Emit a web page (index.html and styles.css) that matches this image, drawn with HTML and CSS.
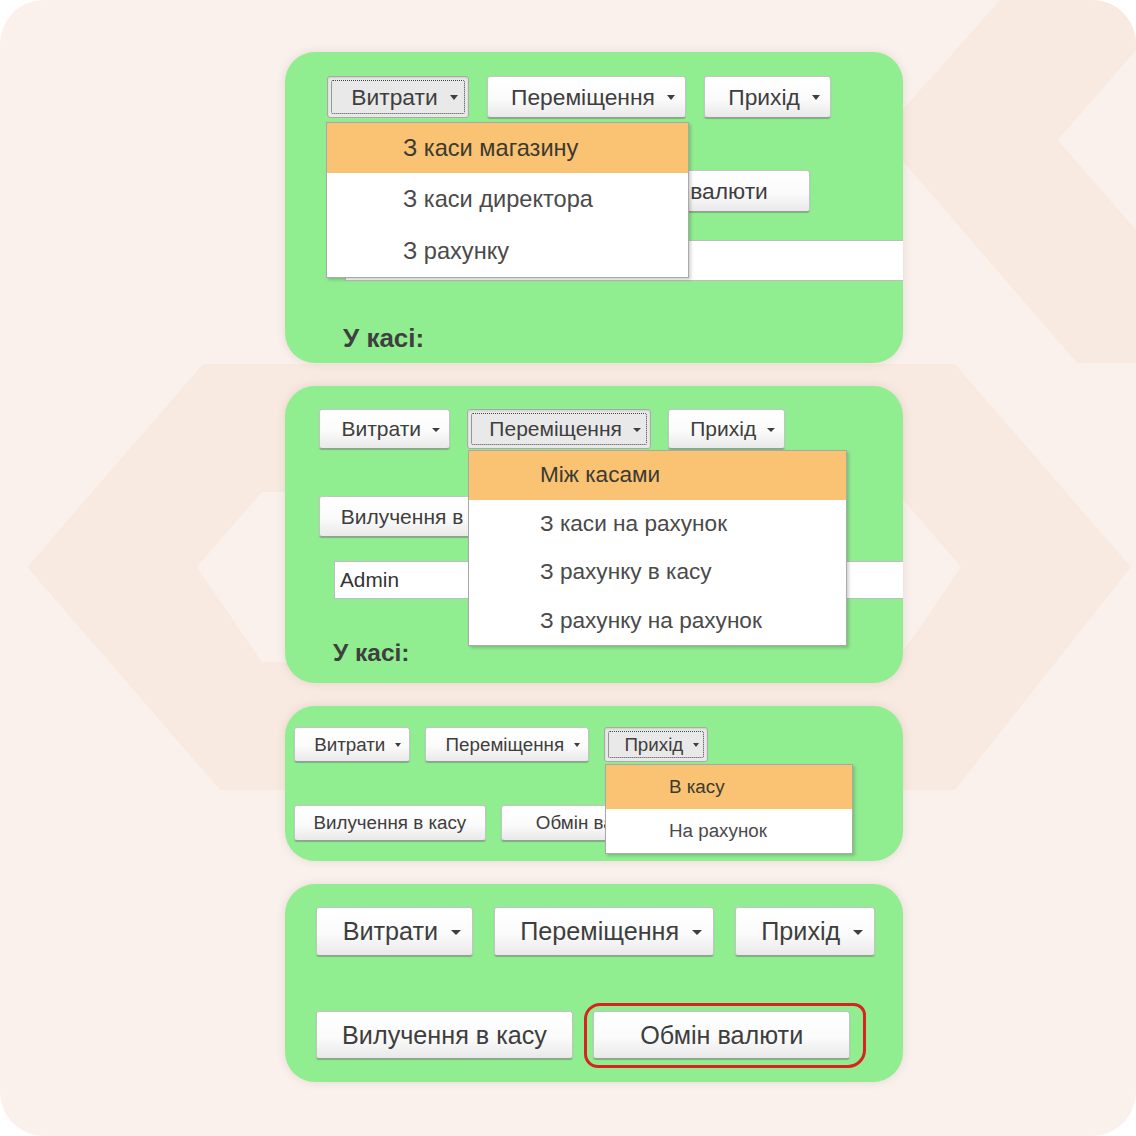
FILE: index.html
```html
<!DOCTYPE html>
<html lang="uk">
<head>
<meta charset="utf-8">
<title>Каса</title>
<link rel="stylesheet" href="styles.css">
</head>
<body>
<div class="frame">
  <svg class="backdrop" width="1136" height="1136" viewBox="0 0 1136 1136" aria-hidden="true">
    <path class="band" fill-rule="evenodd" d="M203 364 L955 364 L1131 567 L955 790 L220 790 L27 567 Z M262 492 L896 492 L961 567 L896 662 L262 662 L197 567 Z"/>
    <path class="band" d="M1000 0 L1136 0 L1136 50 L1058 140 L1136 230 L1136 363 L1077 363 L880 135 Z"/>
  </svg>

  <main class="stack">
    <!-- Витрати menu open -->
    <section class="panel p1">
      <div class="row top">
        <div class="btn drop pressed"><span class="label">Витрати</span><i class="caret"></i></div>
        <div class="btn drop"><span class="label">Переміщення</span><i class="caret"></i></div>
        <div class="btn drop"><span class="label">Прихід</span><i class="caret"></i></div>
      </div>
      <div class="row mid">
        <div class="btn wide">Вилучення в касу</div>
        <div class="btn wide">Обмін валюти</div>
      </div>
      <div class="field"></div>
      <div class="cash">У касі:</div>
      <ul class="menu">
        <li class="active">З каси магазину</li>
        <li>З каси директора</li>
        <li>З рахунку</li>
      </ul>
    </section>

    <!-- Переміщення menu open -->
    <section class="panel p2">
      <div class="row top">
        <div class="btn drop"><span class="label">Витрати</span><i class="caret"></i></div>
        <div class="btn drop pressed"><span class="label">Переміщення</span><i class="caret"></i></div>
        <div class="btn drop"><span class="label">Прихід</span><i class="caret"></i></div>
      </div>
      <div class="row mid">
        <div class="btn wide">Вилучення в касу</div>
        <div class="btn wide">Обмін валюти</div>
      </div>
      <div class="field">Admin</div>
      <div class="cash">У касі:</div>
      <ul class="menu">
        <li class="active">Між касами</li>
        <li>З каси на рахунок</li>
        <li>З рахунку в касу</li>
        <li>З рахунку на рахунок</li>
      </ul>
    </section>

    <!-- Прихід menu open -->
    <section class="panel p3">
      <div class="row top">
        <div class="btn drop"><span class="label">Витрати</span><i class="caret"></i></div>
        <div class="btn drop"><span class="label">Переміщення</span><i class="caret"></i></div>
        <div class="btn drop pressed"><span class="label">Прихід</span><i class="caret"></i></div>
      </div>
      <div class="row mid">
        <div class="btn wide">Вилучення в касу</div>
        <div class="btn wide">Обмін валюти</div>
      </div>
      <ul class="menu">
        <li class="active">В касу</li>
        <li>На рахунок</li>
      </ul>
    </section>

    <!-- all menus closed, exchange button marked -->
    <section class="panel p4">
      <div class="row top">
        <div class="btn drop"><span class="label">Витрати</span><i class="caret"></i></div>
        <div class="btn drop"><span class="label">Переміщення</span><i class="caret"></i></div>
        <div class="btn drop"><span class="label">Прихід</span><i class="caret"></i></div>
      </div>
      <div class="row mid">
        <div class="btn wide">Вилучення в касу</div>
        <div class="btn wide marked">Обмін валюти<span class="ring"></span></div>
      </div>
    </section>
  </main>
</div>
</body>
</html>
```

FILE: styles.css
```css
* { box-sizing: border-box; }

html, body {
  margin: 0;
  padding: 0;
  background: #ffffff;
}

body {
  font-family: "Liberation Sans", Arial, sans-serif;
  color: #454545;
}

.frame {
  position: relative;
  width: 1136px;
  height: 1136px;
  border-radius: 44px;
  background: #fbf1ec;
  overflow: hidden;
}

.backdrop {
  position: absolute;
  left: 0;
  top: 0;
}

.band { fill: #f9eae1; }

.stack {
  position: relative;
  display: flex;
  flex-direction: column;
  gap: 23px;
  padding: 52px 0 0 285px;
}

/* green form panels */
.panel {
  position: relative;
  width: 618px;
  background: #90ee90;
  border-radius: 30px;
  overflow: hidden;
  box-shadow: 0 0 10px rgba(120, 110, 100, 0.18);
}

.row {
  display: flex;
  gap: 0.8em;
}

/* buttons */
.btn {
  position: relative;
  display: flex;
  align-items: center;
  flex: none;
  background: linear-gradient(#ffffff 0%, #fbfbfb 55%, #e9e9e9 100%);
  border: 1px solid #c4c4c4;
  border-bottom-color: #9a9a9a;
  border-radius: 3px;
  box-shadow: 0 1px 1px rgba(0, 0, 0, 0.22);
  color: #3e3e3e;
  white-space: nowrap;
}

.drop {
  padding: 0 0.44em 0 1.02em;
}

.caret {
  display: block;
  width: 0;
  height: 0;
  margin-left: 0.52em;
  border-left: 0.2em solid transparent;
  border-right: 0.2em solid transparent;
  border-top: 0.22em solid #3e3e3e;
  margin-top: 0.08em;
}

.pressed {
  background: #e9e9e9;
  border-color: #a9a9a9;
  box-shadow: inset 0 1px 2px rgba(0, 0, 0, 0.12);
}

.pressed::after {
  content: "";
  position: absolute;
  inset: 3px;
  border: 1px dotted #444;
  border-radius: 2px;
}

.wide {
  width: 10.2em;
  justify-content: center;
}

.field {
  background: #fff;
  border: 1px solid #bdbdbd;
  border-right: 0;
  width: 640px;
  display: flex;
  align-items: center;
  color: #333;
}

.cash {
  font-weight: bold;
  color: #3f3f3f;
  line-height: 1;
}

/* dropdown lists */
.menu {
  position: absolute;
  margin: 0;
  padding: 0;
  list-style: none;
  background: #fff;
  border: 1px solid #a9a9a9;
  box-shadow: 2px 2px 3px rgba(0, 0, 0, 0.18);
  color: #4a4a4a;
}

.menu li {
  display: flex;
  align-items: center;
  white-space: nowrap;
}

.menu li.active {
  background: #fac273;
  color: #3b3a30;
}

/* panel 1 */
.p1 {
  font-size: 22.8px;
  height: 311px;
  padding: 24px 0 0 42px;
}
.p1 .btn { height: 42px; }
.p1 .mid { margin-top: 52px; }
.p1 .field { margin: 28px 0 0 18px; height: 41px; }
.p1 .cash { font-size: 26px; margin: 44px 0 0 16px; }
.p1 .menu { left: 41px; top: 70px; width: 363px; font-size: 23.6px; }
.p1 .menu li { height: 52px; padding-left: 76px; }
.p1 .menu li.active { height: 50px; }

/* panel 2 */
.p2 {
  font-size: 21px;
  height: 297px;
  padding: 23px 0 0 34px;
}
.p2 .btn { height: 40px; }
.p2 .mid { margin-top: 47px; }
.p2 .mid .btn { height: 41px; }
.p2 .field { margin: 24px 0 0 15px; height: 38px; padding-left: 5px; font-size: 20.8px; }
.p2 .cash { font-size: 24.5px; margin: 42px 0 0 14px; }
.p2 .menu { left: 183px; top: 64px; width: 379px; font-size: 22.6px; }
.p2 .menu li { height: 48.5px; padding-left: 71px; }

/* panel 3 */
.p3 {
  font-size: 18.8px;
  height: 155px;
  padding: 21px 0 0 9px;
}
.p3 .btn { height: 35px; }
.p3 .mid { margin-top: 43px; }
.p3 .mid .btn { height: 36px; }
.p3 .menu { left: 320px; top: 58px; width: 248px; font-size: 18.8px; }
.p3 .menu li { height: 44px; padding-left: 63px; }

/* panel 4 */
.p4 {
  font-size: 25.2px;
  height: 198px;
  padding: 23px 0 0 31px;
}
.p4 .btn { height: 49px; }
.p4 .mid { margin-top: 55px; }
.p4 .mid .btn { height: 48px; }

.marked { overflow: visible; }

.ring {
  position: absolute;
  left: -10px;
  top: -9px;
  right: -17px;
  bottom: -10px;
  border: 3.5px solid #d92222;
  border-radius: 16px 12px 18px 14px;
  pointer-events: none;
}
```
